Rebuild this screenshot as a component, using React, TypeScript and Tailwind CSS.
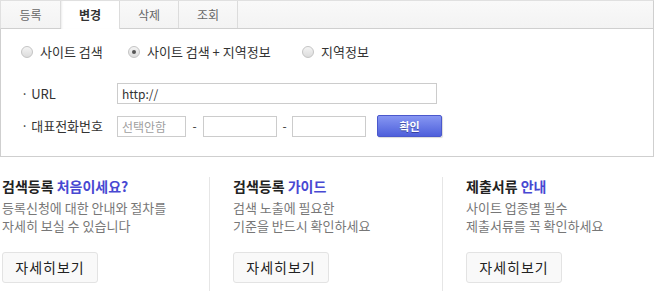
import React from 'react';

const tabs = ['등록', '변경', '삭제', '조회'];

type Guide = { title: string; accent: string; lines: string[] };

const guides: Guide[] = [
  { title: '검색등록', accent: '처음이세요?', lines: ['등록신청에 대한 안내와 절차를', '자세히 보실 수 있습니다'] },
  { title: '검색등록', accent: '가이드', lines: ['검색 노출에 필요한', '기준을 반드시 확인하세요'] },
  { title: '제출서류', accent: '안내', lines: ['사이트 업종별 필수', '제출서류를 꼭 확인하세요'] },
];

function Radio({ checked, label }: { checked?: boolean; label: string }) {
  return (
    <div className="flex items-center">
      <span className="w-[12px] h-[12px] rounded-full border border-[#c4c4c4] bg-gradient-to-b from-[#f4f4f4] to-[#dcdcdc] flex items-center justify-center">
        {checked && <span className="w-[4px] h-[4px] rounded-full bg-[#555]" />}
      </span>
      <span className="ml-[7px] text-[13px] text-[#333] leading-[20px]">{label}</span>
    </div>
  );
}

export default function App() {
  return (
    <div className="w-[654px] h-[291px] bg-white font-['Noto_Sans_CJK_KR','Noto_Sans',sans-serif] overflow-hidden">
      {/* tabs */}
      <div className="flex h-[29px] bg-gradient-to-b from-[#f9f9f9] to-[#f3f3f3] border-t border-t-[#e0e0e0] border-b border-b-[#cfcfcf] border-r border-r-[#cfcfcf] border-l border-l-[#e0e0e0]">
        {tabs.map((t, i) => {
          const active = i === 1;
          return (
            <div
              key={t}
              className={
                (i === 0 ? 'w-[60px] ' : 'w-[59px] ') +
                'flex items-center justify-center border-r border-r-[#dcdcdc] text-[12px] ' +
                (active
                  ? 'bg-white h-[28px] -mb-px font-bold text-[#333] shadow-[inset_2px_0_2px_-1px_rgba(0,0,0,0.08)]'
                  : 'text-[#666]')
              }
            >
              {t}
            </div>
          );
        })}
      </div>

      {/* form panel */}
      <div className="h-[128px] border-x border-b border-[#cfcfcf] pt-[13px]">
        <div className="flex items-center h-[20px] pl-[20px]">
          <div className="w-[107px]"><Radio label="사이트 검색" /></div>
          <div className="w-[174px]"><Radio checked label="사이트 검색 + 지역정보" /></div>
          <Radio label="지역정보" />
        </div>

        <div className="flex items-center h-[21px] mt-[21px] pl-[20px]">
          <span className="w-[96px] text-[13px] text-[#333]">· URL</span>
          <div className="w-[320px] h-[21px] border border-[#ccc] flex items-center pl-[4px] text-[12px] text-[#333]">http://</div>
        </div>

        <div className="flex items-center h-[22px] mt-[11px] pl-[20px]">
          <span className="w-[96px] text-[13px] text-[#333]">· 대표전화번호</span>
          <div className="w-[69px] h-[21px] mt-px border border-[#ccc] flex items-center pl-[4px] text-[12px] text-[#a0a0a0]">선택안함</div>
          <span className="w-[17px] text-center text-[12px] text-[#333]">-</span>
          <div className="w-[74px] h-[21px] mt-px border border-[#ccc]" />
          <span className="w-[15px] text-center text-[12px] text-[#333]">-</span>
          <div className="w-[74px] h-[21px] mt-px border border-[#ccc]" />
          <button className="ml-[11px] w-[65px] h-[22px] rounded-[2px] border border-[#4a58cc] bg-gradient-to-b from-[#8796f2] to-[#4f5fdb] text-white text-[11px] font-bold [text-shadow:0_1px_0_rgba(0,0,60,0.4)] shadow-[1px_1px_1px_rgba(0,0,0,0.15)]">
            확인
          </button>
        </div>
      </div>

      {/* guides */}
      <div className="flex mt-[20px]">
        {guides.map((g, i) => (
          <div
            key={i}
            className={
              (i === 0 ? 'w-[210px] pl-[2px] ' : i === 1 ? 'w-[233px] pl-[23px] ' : 'flex-1 pl-[23px] ') +
              (i < 2 ? 'border-r border-r-[#e6e6e6] ' : '') +
              'h-[114px]'
            }
          >
            <div className="text-[14px] font-bold leading-[20px] text-[#222] -mt-px">
              {g.title} <span className="text-[#4848d2]">{g.accent}</span>
            </div>
            <div className="mt-[3px] text-[13px] leading-[18px] text-[#777]">
              {g.lines.map((l) => (
                <div key={l}>{l}</div>
              ))}
            </div>
            <button className="mt-[17px] w-[96px] h-[31px] rounded-[3px] border border-[#e3e3e3] bg-[#f9f9f9] text-[14px] text-[#222] tracking-[1px]">
              자세히보기
            </button>
          </div>
        ))}
      </div>
    </div>
  );
}
